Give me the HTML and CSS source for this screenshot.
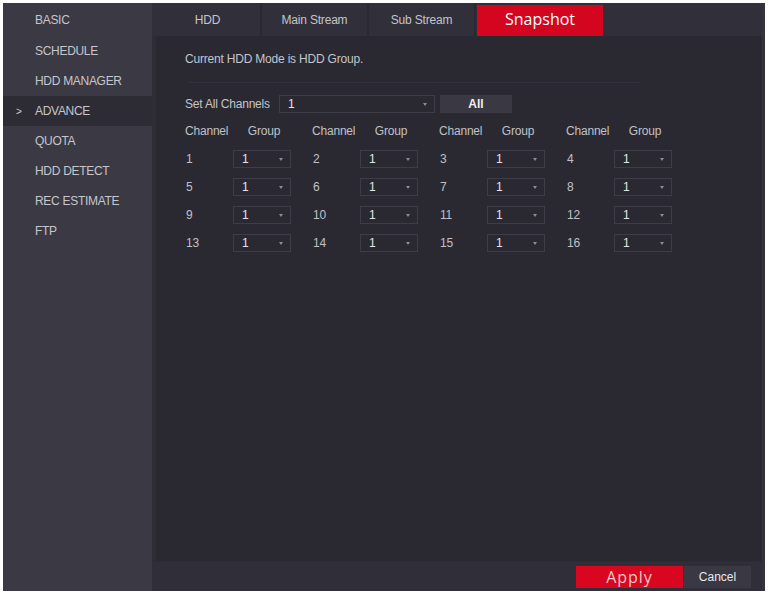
FILE: index.html
```html
<!DOCTYPE html>
<html lang="en">
<head>
    <meta charset="UTF-8">
    <title>Storage - Advance</title>
    <link rel="stylesheet" href="styles.css">
</head>
<body>
    <div class="frame">
        <aside class="sidebar">
            <ul>
                <li>BASIC</li>
                <li>SCHEDULE</li>
                <li>HDD MANAGER</li>
                <li class="active"><span class="chev">&gt;</span>ADVANCE</li>
                <li>QUOTA</li>
                <li>HDD DETECT</li>
                <li>REC ESTIMATE</li>
                <li>FTP</li>
            </ul>
        </aside>
        <main class="main">
            <nav class="tabs">
                <div class="tab">HDD</div>
                <div class="tab">Main Stream</div>
                <div class="tab">Sub Stream</div>
                <div class="tab snap">Snapshot</div>
            </nav>
            <section class="content">
                <p class="mode">Current HDD Mode is HDD Group.</p>
                <div class="sep"></div>
                <div class="set-all">
                    <span class="set-label">Set All Channels</span>
                    <div class="select wide"><span>1</span><i class="caret"></i></div>
                    <div class="btn-all">All</div>
                </div>
                <div class="grid">
                    <div class="hd">Channel</div><div class="hd grp">Group</div>
                    <div class="hd">Channel</div><div class="hd grp">Group</div>
                    <div class="hd">Channel</div><div class="hd grp">Group</div>
                    <div class="hd">Channel</div><div class="hd grp">Group</div>

                    <div class="ch">1</div><div class="select"><span>1</span><i class="caret"></i></div>
                    <div class="ch">2</div><div class="select"><span>1</span><i class="caret"></i></div>
                    <div class="ch">3</div><div class="select"><span>1</span><i class="caret"></i></div>
                    <div class="ch">4</div><div class="select"><span>1</span><i class="caret"></i></div>

                    <div class="ch">5</div><div class="select"><span>1</span><i class="caret"></i></div>
                    <div class="ch">6</div><div class="select"><span>1</span><i class="caret"></i></div>
                    <div class="ch">7</div><div class="select"><span>1</span><i class="caret"></i></div>
                    <div class="ch">8</div><div class="select"><span>1</span><i class="caret"></i></div>

                    <div class="ch">9</div><div class="select"><span>1</span><i class="caret"></i></div>
                    <div class="ch">10</div><div class="select"><span>1</span><i class="caret"></i></div>
                    <div class="ch">11</div><div class="select"><span>1</span><i class="caret"></i></div>
                    <div class="ch">12</div><div class="select"><span>1</span><i class="caret"></i></div>

                    <div class="ch">13</div><div class="select"><span>1</span><i class="caret"></i></div>
                    <div class="ch">14</div><div class="select"><span>1</span><i class="caret"></i></div>
                    <div class="ch">15</div><div class="select"><span>1</span><i class="caret"></i></div>
                    <div class="ch">16</div><div class="select"><span>1</span><i class="caret"></i></div>
                </div>
            </section>
            <footer class="footer">
                <div class="btn-apply">Apply</div>
                <div class="btn-cancel">Cancel</div>
            </footer>
        </main>
    </div>
</body>
</html>
```

FILE: styles.css
```css
body { margin: 0; padding: 0; background: #fff; font-family: "Liberation Sans", Arial, sans-serif; font-size: 12px; color: #c4c4ca; }

.frame { margin: 3px 0 0 3px; width: 762px; height: 588px; display: grid; grid-template-columns: 149px 1fr; }

/* left menu */
.sidebar { background: #3a3944; }
.sidebar ul { list-style: none; margin: 0; padding: 3px 0 0 0; }
.sidebar li { height: 30px; line-height: 31px; padding-left: 32px; color: #c6c6cc; position: relative; letter-spacing: -0.3px; }
.sidebar li:first-child { line-height: 29px; }
.sidebar li.active { background: #2d2c35; }
.chev { position: absolute; left: 13px; font-size: 10px; color: #d0d0d4; }

/* right part */
.main { display: flex; flex-direction: column; background: #2a2932; border-right: 3px solid #34333d; }

.tabs { height: 33px; display: flex; background: #31303a; padding-left: 3px; }
.tab { width: 105px; border-right: 2px solid #2a2931; text-align: center; line-height: 35px; color: #c4c4ca; letter-spacing: -0.2px; }
.tab.snap { width: 126px; margin: 2px 0 0 1px; line-height: 28px; background: #d3051f; color: #fff; font-family: "Open Sans", sans-serif; font-size: 16px; border-right: none; letter-spacing: 0; }

.content { flex: 1; padding: 14px 0 0 32px; border-left: 4px solid #2e2d36; }
.mode { margin: 0; height: 18px; line-height: 18px; margin-left: -3px; color: #c4c4ca; letter-spacing: -0.2px; }
.sep { height: 1px; background: #33323c; margin: 14px 0 0 0; width: 452px; }

.set-all { display: flex; align-items: center; height: 18px; margin: 12px 0 0 -3px; }
.set-label { width: 94px; letter-spacing: -0.2px; }
.select { width: 58px; height: 18px; box-sizing: border-box; border: 1px solid #3d3c47; background: #2a2932; display: flex; align-items: center; padding-left: 8px; position: relative; color: #e4e4e8; }
.select.wide { width: 156px; }
.btn-all { width: 72px; height: 18px; line-height: 18px; margin-left: 5px; background: #393843; text-align: center; color: #f0f0f2; font-weight: bold; }
.caret { position: absolute; right: 7px; top: 7px; border-left: 2.5px solid transparent; border-right: 2.5px solid transparent; border-top: 3px solid #8c8c94; }

/* channel / group table: 4 blocks of 127px */
.grid { display: grid; grid-template-columns: repeat(4, 48px 79px); row-gap: 10px; margin: 9px 0 0 -3px; }
.hd, .ch { height: 18px; line-height: 18px; color: #c0c0c6; letter-spacing: -0.2px; }
.ch { padding-left: 1px; }
.grp { width: 62px; text-align: center; }

.footer { height: 29px; background: #302f39; display: flex; justify-content: flex-end; align-items: center; padding-right: 11px; border-top: 1px solid #2d2c35; }
.btn-apply { width: 107px; height: 22px; line-height: 22px; background: #d8071f; color: #f4c9ce; text-align: center; font-family: "Open Sans", sans-serif; font-size: 16px; letter-spacing: 1px; }
.btn-cancel { width: 67px; height: 22px; line-height: 22px; margin-left: 1px; background: #393843; color: #e8e8ec; text-align: center; }
```
